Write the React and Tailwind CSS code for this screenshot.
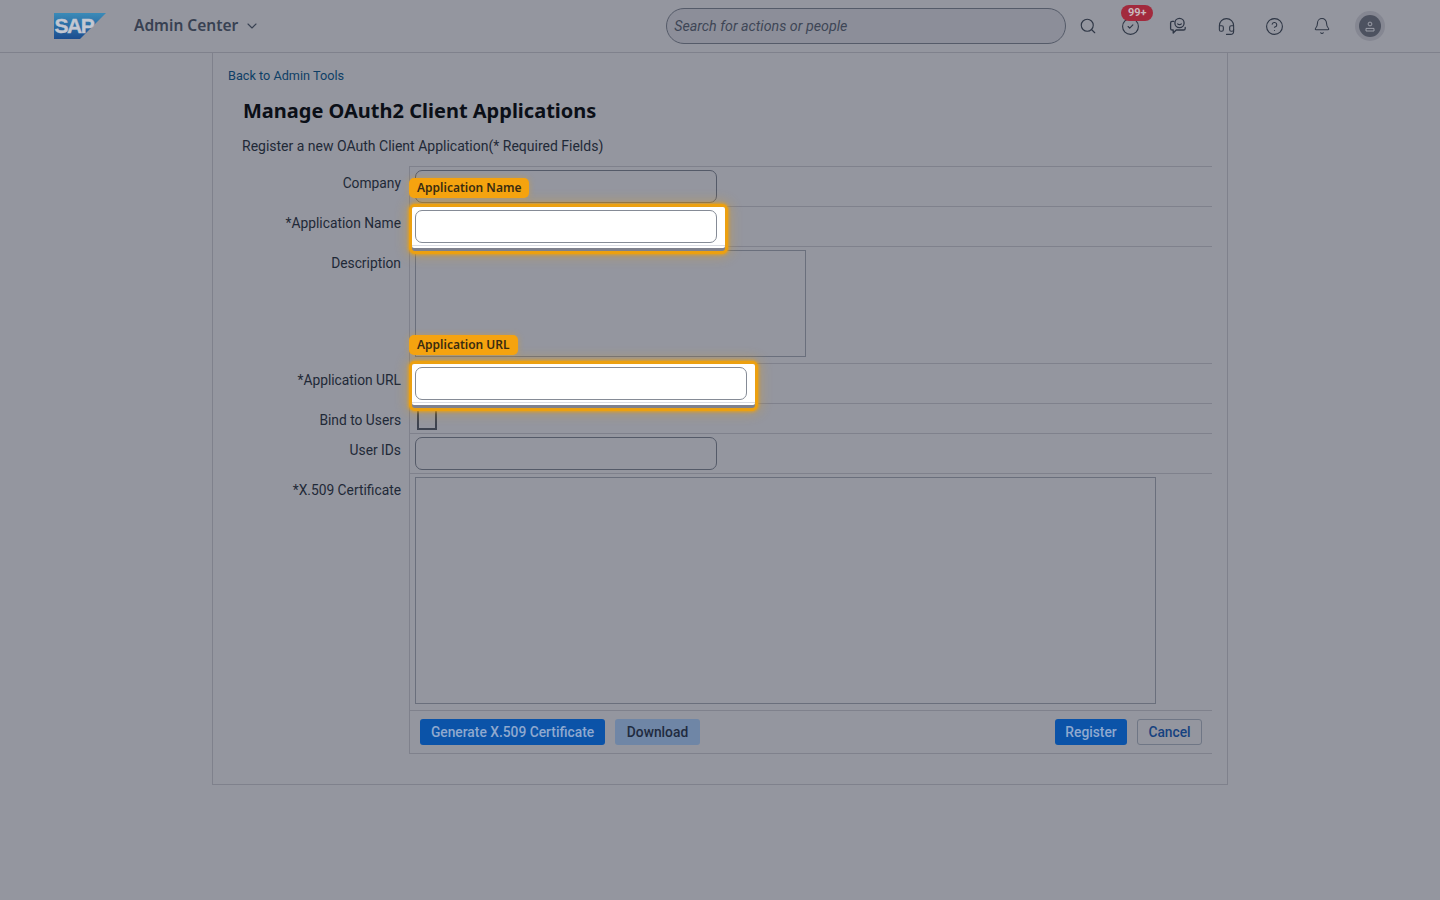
import { Search, CircleCheck, Headset, CircleHelp, Bell, ChevronDown } from 'lucide-react';

const Logo = () => (
  <svg width="52" height="26" viewBox="0 0 52 26" className="shrink-0">
    <defs>
      <linearGradient id="sapGrad" x1="0" y1="0" x2="0" y2="1">
        <stop offset="0" stopColor="#3b8bb8" />
        <stop offset="1" stopColor="#1b4d8f" />
      </linearGradient>
    </defs>
    <polygon points="0,0 52,0 26,26 0,26" fill="url(#sapGrad)" />
    <text x="0.5" y="20" fontFamily="Liberation Sans, sans-serif" fontWeight="700" fontSize="21" letterSpacing="-1.4" stroke="#c3c7d1" strokeWidth="0.4" fill="#c3c7d1">
      SAP
    </text>
  </svg>
);

const ChatIcon = () => (
  <svg width="18" height="18" viewBox="0 0 18 18" fill="none" stroke="#2f3746" strokeWidth="1.3" strokeLinecap="round" strokeLinejoin="round">
    <circle cx="10.5" cy="6" r="4.6" />
    <path d="M8.7 6.9c.9 1 2.7 1 3.6 0" />
    <path d="M4.8 4.4H3.2c-.9 0-1.6.7-1.6 1.6v5.4c0 .9.7 1.6 1.6 1.6h1v3l3-3h7.3c.9 0 1.7-.7 1.7-1.6v-.9" />
  </svg>
);

const HeaderIcon = ({ children }) => (
  <div className="relative w-12 h-9 flex items-center justify-center">{children}</div>
);

const Header = () => (
  <header className="h-[53px] border-b border-[#7f818c] flex items-center pl-[54px] shrink-0">
    <Logo />
    <span className="ml-7 font-['Noto_Sans',sans-serif] text-[15.5px] font-semibold text-[#384152]">Admin Center</span>
    <ChevronDown size={16} strokeWidth={1.6} className="ml-[6px] text-[#384152]" />
    <div className="ml-[406px] w-[400px] h-9 rounded-[18px] border border-[#555b69] bg-[#8c8e99] flex items-center px-[7px] pt-[2px]">
      <span className="text-[14.25px] italic text-[#3e4656]">Search for actions or people</span>
    </div>
    <div className="flex items-center ml-[-2px]">
      <div className="w-[48px] flex justify-center -mr-[6px]">
        <Search size={18} strokeWidth={1.5} className="text-[#2f3746]" />
      </div>
      <HeaderIcon>
        <CircleCheck size={19} strokeWidth={1.4} className="text-[#2f3746]" />
        <span className="absolute left-[15px] top-[-3px] w-8 h-4 rounded-full bg-[#a22a3d] text-[#c9b7bd] text-[11px] font-bold leading-4 text-center">
          99+
        </span>
      </HeaderIcon>
      <HeaderIcon>
        <ChatIcon />
      </HeaderIcon>
      <HeaderIcon>
        <Headset size={19} strokeWidth={1.4} className="text-[#2f3746]" />
      </HeaderIcon>
      <HeaderIcon>
        <CircleHelp size={19} strokeWidth={1.4} className="text-[#2f3746]" />
      </HeaderIcon>
      <HeaderIcon>
        <Bell size={18} strokeWidth={1.4} className="text-[#2f3746]" />
      </HeaderIcon>
      <HeaderIcon>
        <div className="w-[30px] h-[30px] rounded-full bg-[#858792] flex items-center justify-center">
          <div className="w-[22px] h-[22px] rounded-full bg-[#4d5260] flex items-center justify-center">
            <svg width="10" height="11" viewBox="0 0 10 11" fill="none" stroke="#a4a6b0" strokeWidth="0.9">
              <circle cx="5" cy="3" r="1.9" />
              <path d="M1 10V7.4h8V10z" />
            </svg>
          </div>
        </div>
      </HeaderIcon>
    </div>
  </header>
);

const Field = ({ className = '' }) => (
  <div className={`h-[33px] rounded-[7px] border border-[#545a68] ${className}`} />
);

const Row = ({ label, className = '', children }) => (
  <div className="flex">
    <div className="w-[185px] pr-2 pt-[8px] text-right text-[13.8px] leading-[19px] text-[#1f2937] shrink-0">{label}</div>
    <div className={`flex-1 border-l border-t border-[#7f818c] pl-[5px] relative ${className}`}>{children}</div>
  </div>
);

// the lit-up field: white box with an orange glow, name tag on top
const Highlighted = ({ tag, width, outerWidth }) => (
  <>
    <div
      className="absolute left-[-1px] top-[-3px] h-[50px] rounded-[6px] border-[3px] border-[#eca010] bg-[#7f818d] shadow-[0_0_3px_1px_rgba(236,160,16,0.8),0_0_12px_3px_rgba(236,160,16,0.3)] z-10"
      style={{ width: outerWidth }}
    >
      <div className="h-[41px] bg-white rounded-[2px]">
        <div className="h-[39px] border-b border-[#d9dbe2]" />
      </div>
    </div>
    <div
      className="relative z-20 h-[33px] rounded-[7px] border border-[#858b96] bg-white"
      style={{ width }}
    />
    <span className="absolute z-20 left-[-1px] top-[-29px] h-[20px] px-2 rounded-[5px] bg-[#f5a30f] font-['Noto_Sans',sans-serif] text-[12px] font-semibold leading-[20px] text-[#3a2c10] whitespace-nowrap shadow-[0_0_6px_rgba(240,163,10,0.4)]">
      {tag}
    </span>
  </>
);

const App = () => {
  return (
    <div className="w-[1440px] h-[900px] overflow-hidden bg-[#94969f] flex flex-col font-['Roboto',sans-serif]">
      <Header />
      <main className="w-[1016px] h-[732px] ml-[212px] border-x border-b border-[#7f818c] pl-[15px] pr-[15px] shrink-0">
        <a className="block mt-[15px] text-[12.7px] leading-4 text-[#0f3f66]">Back to Admin Tools</a>
        <h1 className="mt-[13px] ml-[15px] font-['Noto_Sans',sans-serif] text-[20px] leading-[28px] font-bold text-[#0b0f17]">
          Manage OAuth2 Client Applications
        </h1>
        <p className="mt-[11px] ml-[14px] text-[14px] leading-[20px] text-[#1f2937]">
          Register a new OAuth Client Application(* Required Fields)
        </p>
        <div className="mt-[10px] -ml-[4px]">
          <Row label="Company" className="h-[40px] pt-[3px]">
            <Field className="w-[302px]" />
          </Row>
          <Row label="*Application Name" className="h-[40px] pt-[3px]">
            <Highlighted tag="Application Name" width={302} outerWidth={319} />
          </Row>
          <Row label="Description" className="h-[117px] pt-[3px]">
            <div className="w-[391px] h-[107px] border border-[#6a6f7c]" />
          </Row>
          <Row label="*Application URL" className="h-[40px] pt-[3px]">
            <Highlighted tag="Application URL" width={332} outerWidth={349} />
          </Row>
          <Row label="Bind to Users" className="h-[30px] pt-[4px]">
            <div className="ml-[2px] w-5 h-[22px] border-2 border-[#3d4350]" />
          </Row>
          <Row label="User IDs" className="h-[40px] pt-[3px]">
            <Field className="w-[302px]" />
          </Row>
          <Row label="*X.509 Certificate" className="h-[237px] pt-[3px]">
            <div className="w-[741px] h-[227px] border border-[#6a6f7c]" />
          </Row>
          <div className="flex">
            <div className="w-[185px] shrink-0" />
            <div className="flex-1 h-[44px] border-l border-y border-[#7f818c] pl-[10px] pr-[10px] flex items-center text-[13.8px]">
              <button className="w-[185px] h-[26px] rounded-[3px] bg-[#0b53a8] text-[#8fa9cf] font-medium">
                Generate X.509 Certificate
              </button>
              <button className="ml-[10px] w-[85px] h-[26px] rounded-[3px] bg-[#6f86a6] text-[#1f2b40] font-medium">
                Download
              </button>
              <button className="ml-auto w-[72px] h-[26px] rounded-[3px] bg-[#0b53a8] text-[#8fa9cf] font-medium">
                Register
              </button>
              <button className="ml-[10px] w-[65px] h-[26px] rounded-[3px] border border-[#6f7685] text-[#16427f] font-medium">
                Cancel
              </button>
            </div>
          </div>
        </div>
      </main>
    </div>
  );
};

export default App;
